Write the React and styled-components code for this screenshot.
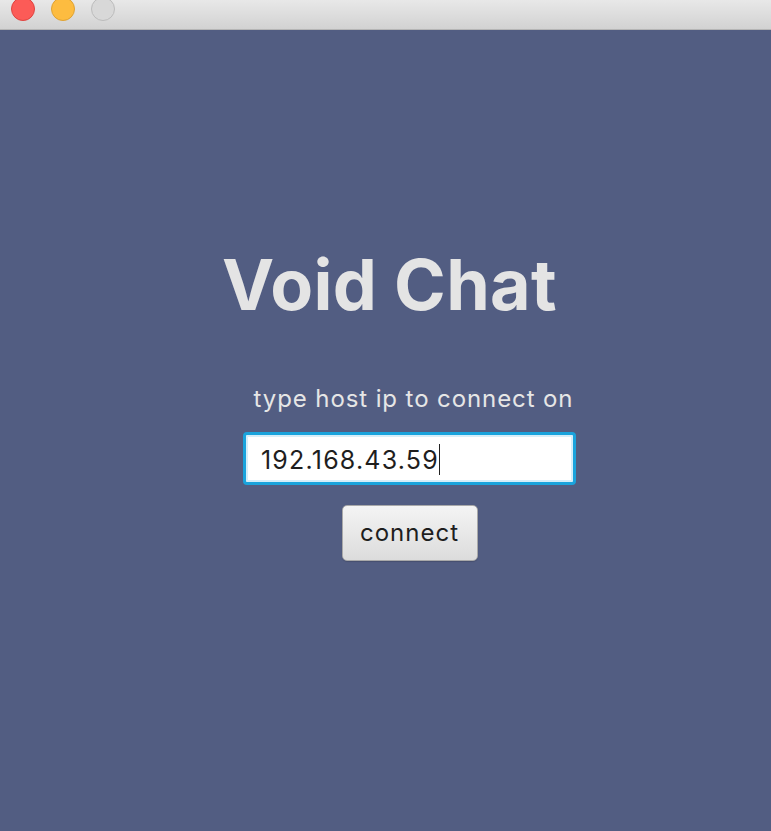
import React from "react";
import styled, { createGlobalStyle } from "styled-components";

const Global = createGlobalStyle`
  html, body { margin: 0; padding: 0; background: #525d82; }
  body { font-family: Inter, "Noto Sans", sans-serif; }
`;

const Window = styled.div`
  width: 771px;
  height: 831px;
  display: flex;
  flex-direction: column;
  background: #525d82;
  overflow: hidden;
`;

const TitleBar = styled.div`
  height: 29px;
  flex: none;
  display: flex;
  align-items: flex-start;
  gap: 16px;
  padding: 0 0 0 11px;
  background: linear-gradient(#e8e8e8, #d2d2d2);
  border-bottom: 1px solid #b5b5b5;
  overflow: hidden;
`;

const Light = styled.span`
  width: 24px;
  height: 24px;
  margin-top: -3px;
  border-radius: 50%;
  background: ${(p) => p.$bg};
  border: 1px solid ${(p) => p.$bd};
  box-sizing: border-box;
`;

const Content = styled.div`
  flex: 1;
  display: flex;
  flex-direction: column;
  align-items: center;
  padding-top: 215px;
  padding-left: 48px;
`;

const Title = styled.h1`
  margin: 0 40px 0 0;
  font-family: Inter, sans-serif;
  font-weight: 700;
  font-size: 70px;
  line-height: 80px;
  color: #e4e4e4;
  letter-spacing: 0.3px;
`;

const Label = styled.div`
  margin-top: 60px;
  font-size: 24px;
  line-height: 28px;
  letter-spacing: 0.9px;
  color: #e6e6e6;
  padding-left: 8px;
`;

const Input = styled.div`
  margin-top: 19px;
  width: 333px;
  height: 53px;
  box-sizing: border-box;
  border-radius: 4px;
  border: 3px solid #1aa3dc;
  box-shadow: inset 0 0 0 2px #d6eef9;
  background: #fff;
  display: flex;
  align-items: center;
  padding-left: 15px;
  padding-top: 2px;
  font-size: 25px;
  letter-spacing: 1.2px;
  color: #1e1e1e;
`;

const Caret = styled.span`
  display: inline-block;
  width: 1px;
  height: 31px;
  background: #222;
  margin-left: 0;
`;

const Button = styled.button`
  margin-top: 20px;
  width: 136px;
  height: 56px;
  box-sizing: border-box;
  border-radius: 5px;
  border: 1px solid #a9a9a9;
  background: linear-gradient(#f4f4f4, #dcdcdc);
  box-shadow: 0 1px 1px rgba(0,0,0,0.15);
  font-family: Inter, sans-serif;
  font-size: 24px;
  letter-spacing: 1px;
  color: #1e1e1e;
  padding: 0 0 2px;
`;

export default function App() {
  return (
    <>
      <Global />
      <Window>
        <TitleBar>
          <Light $bg="#fc5b57" $bd="#de4440" />
          <Light $bg="#fdbc40" $bd="#dea234" />
          <Light $bg="#d8d8d8" $bd="#bcbcbc" />
        </TitleBar>
        <Content>
          <Title>Void Chat</Title>
          <Label>type host ip to connect on</Label>
          <Input>
            192.168.43.59<Caret />
          </Input>
          <Button>connect</Button>
        </Content>
      </Window>
    </>
  );
}
